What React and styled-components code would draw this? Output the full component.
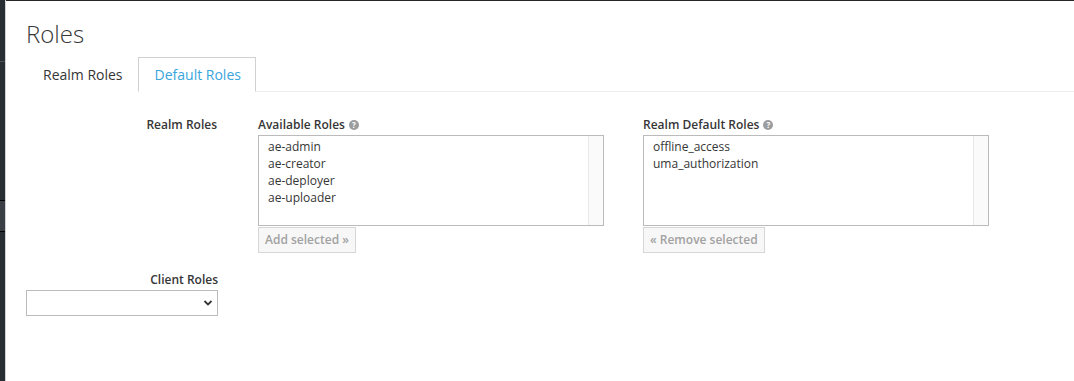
import React from "react";
import styled, { createGlobalStyle } from "styled-components";

const GlobalStyle = createGlobalStyle`
  html, body { margin: 0; padding: 0; background: #fff; }
  body {
    font-family: "Open Sans", "Liberation Sans", sans-serif;
    color: #363636;
    font-size: 12px;
  }
  * { box-sizing: border-box; }
`;

const Page = styled.div`
  display: flex;
  min-height: 381px;
`;

const Sidebar = styled.div`
  width: 6px;
  flex: none;
  display: flex;
  flex-direction: column;
  border-right: 1px solid #d1d1d1;
`;

const SideSegment = styled.div`
  height: ${(p) => (p.$h ? `${p.$h}px` : "auto")};
  flex: ${(p) => (p.$h ? "none" : "1")};
  background: ${(p) => p.$c};
`;

const Main = styled.main`
  flex: 1;
  border-top: 1px solid #252525;
  padding-left: 20px;
`;

const Title = styled.h1`
  margin: 17px 0 0 0;
  font-size: 24px;
  line-height: 32px;
  font-weight: 300;
  color: #363636;
`;

const Tabs = styled.ul`
  list-style: none;
  margin: 7px 0 0 0;
  padding: 0;
  display: flex;
  border-bottom: 1px solid #ededed;
`;

const Tab = styled.li`
  padding: 0 14px 0 16px;
  height: 35px;
  line-height: 33px;
  margin-bottom: -1px;
  font-size: 14px;
  border: 1px solid ${(p) => (p.$active ? "#d1d1d1" : "transparent")};
  border-bottom-color: ${(p) => (p.$active ? "#fff" : "transparent")};
  background: #fff;
  color: ${(p) => (p.$active ? "#39a5dc" : "#363636")};
`;

const FormRow = styled.div`
  display: flex;
  align-items: flex-start;
  margin-top: ${(p) => p.$mt}px;
`;

const LabelCol = styled.div`
  width: 191px;
  flex: none;
  display: flex;
  flex-direction: column;
  align-items: flex-end;
`;

const FieldLabel = styled.label`
  font-weight: 600;
  font-size: 12px;
  line-height: 18px;
  color: #363636;
  text-align: right;
`;

const Columns = styled.div`
  display: flex;
  margin-left: 41px;
`;

const Column = styled.div`
  width: 385px;
  display: flex;
  flex-direction: column;
  align-items: flex-start;
`;

const ColLabel = styled.div`
  font-weight: 600;
  font-size: 12px;
  line-height: 18px;
  margin-bottom: 1px;
  display: flex;
  align-items: center;
  gap: 4px;
`;

const Help = styled.span`
  display: inline-block;
  width: 10px;
  height: 10px;
  border-radius: 50%;
  background: #9a9c9e;
  color: #fff;
  font-size: 8px;
  line-height: 10px;
  font-weight: 700;
  text-align: center;
`;

const ListBox = styled.div`
  width: 346px;
  height: 91px;
  border: 1px solid #bbb;
  display: flex;
  background: #fff;
`;

const ListItems = styled.div`
  flex: 1;
  padding: 2px 9px;
`;

const ListItem = styled.div`
  font-size: 12px;
  line-height: 17px;
  color: #363636;
`;

const ScrollTrack = styled.div`
  width: 15px;
  flex: none;
  background: #fafafa;
  border-left: 1px solid #e8e8e8;
`;

const DisabledButton = styled.button`
  margin-top: 1px;
  height: 26px;
  padding: 0 6px;
  border: 1px solid #d6d6d6;
  background: #f7f7f7;
  color: #a2a2a2;
  font-family: "Open Sans", "Liberation Sans", sans-serif;
  font-weight: 600;
  font-size: 12px;
  line-height: 24px;
  cursor: not-allowed;
`;

const SelectWrap = styled.div`
  position: relative;
  width: 192px;
  height: 26px;
  margin-top: 1px;
  align-self: flex-start;
  border: 1px solid #bbb;
  background: #fff;
`;

const Chevron = styled.svg`
  position: absolute;
  right: 4px;
  top: 8px;
`;

const LeftCol = styled.div`
  width: 192px;
  display: flex;
  flex-direction: column;
  align-items: flex-end;
`;

export default function App() {
  return (
    <>
      <GlobalStyle />
      <Page>
        <Sidebar>
          <SideSegment $h={61} $c="#292e34" />
          <SideSegment $h={1} $c="#4d5258" />
          <SideSegment $h={138} $c="#292e34" />
          <SideSegment $h={1} $c="#030303" />
          <SideSegment $h={30} $c="#393f44" />
          <SideSegment $h={1} $c="#030303" />
          <SideSegment $c="#292e34" />
        </Sidebar>
        <Main>
          <Title>Roles</Title>
          <Tabs>
            <Tab>Realm Roles</Tab>
            <Tab $active>Default Roles</Tab>
          </Tabs>
          <FormRow $mt={24}>
            <LabelCol>
              <FieldLabel>Realm Roles</FieldLabel>
            </LabelCol>
            <Columns>
              <Column>
                <ColLabel>
                  Available Roles <Help>?</Help>
                </ColLabel>
                <ListBox>
                  <ListItems>
                    <ListItem>ae-admin</ListItem>
                    <ListItem>ae-creator</ListItem>
                    <ListItem>ae-deployer</ListItem>
                    <ListItem>ae-uploader</ListItem>
                  </ListItems>
                  <ScrollTrack />
                </ListBox>
                <DisabledButton disabled>Add selected »</DisabledButton>
              </Column>
              <Column>
                <ColLabel>
                  Realm Default Roles <Help>?</Help>
                </ColLabel>
                <ListBox>
                  <ListItems>
                    <ListItem>offline_access</ListItem>
                    <ListItem>uma_authorization</ListItem>
                  </ListItems>
                  <ScrollTrack />
                </ListBox>
                <DisabledButton disabled>« Remove selected</DisabledButton>
              </Column>
            </Columns>
          </FormRow>
          <FormRow $mt={18}>
            <LeftCol>
              <FieldLabel>Client Roles</FieldLabel>
              <SelectWrap>
                <Chevron width="10" height="8" viewBox="0 0 10 8">
                  <polyline
                    points="1.5,2 5,5.5 8.5,2"
                    fill="none"
                    stroke="#363636"
                    strokeWidth="1.8"
                  />
                </Chevron>
              </SelectWrap>
            </LeftCol>
          </FormRow>
        </Main>
      </Page>
    </>
  );
}
